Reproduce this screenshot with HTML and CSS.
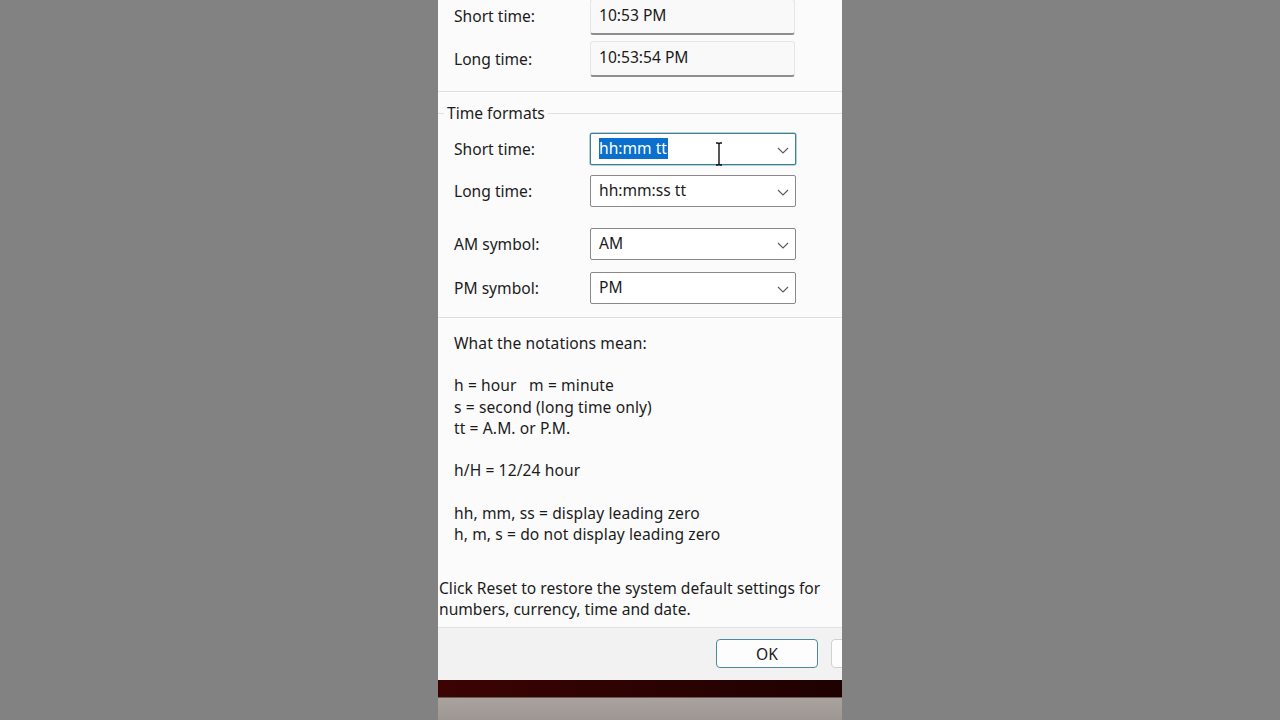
FILE: index.html
```html
<!DOCTYPE html>
<html>
<head>
<meta charset="utf-8">
<link rel="stylesheet" href="styles.css">
</head>
<body>
<div class="panel">
  <div class="top">
    <div class="row r1"><span class="label">Short time:</span><div class="readbox">10:53 PM</div></div>
    <div class="row r2"><span class="label">Long time:</span><div class="readbox">10:53:54 PM</div></div>
  </div>
  <div class="sep"></div>
  <div class="group">
    <div class="legend"><span class="lline short"></span><span class="ltext">Time formats</span><span class="lline"></span></div>
    <div class="row c1"><span class="label">Short time:</span>
      <div class="combo focus"><span class="sel">hh:mm tt</span>
        <svg class="chev" viewBox="0 0 12 7" width="12" height="7"><path d="M1 1 L6 6 L11 1" fill="none" stroke="#5a5a5a" stroke-width="1.1"/></svg>
        <svg class="ibeam" viewBox="0 0 8 24" width="8" height="24"><path d="M1 1 H3 L4 2 L5 1 H7 M4 2 V22 M1 23 H3 L4 22 L5 23 H7" fill="none" stroke="#111" stroke-width="1.4"/></svg>
      </div>
    </div>
    <div class="row c2"><span class="label">Long time:</span>
      <div class="combo"><span>hh:mm:ss tt</span><svg class="chev" viewBox="0 0 12 7" width="12" height="7"><path d="M1 1 L6 6 L11 1" fill="none" stroke="#5a5a5a" stroke-width="1.1"/></svg></div>
    </div>
    <div class="row c3"><span class="label">AM symbol:</span>
      <div class="combo"><span>AM</span><svg class="chev" viewBox="0 0 12 7" width="12" height="7"><path d="M1 1 L6 6 L11 1" fill="none" stroke="#5a5a5a" stroke-width="1.1"/></svg></div>
    </div>
    <div class="row c4"><span class="label">PM symbol:</span>
      <div class="combo"><span>PM</span><svg class="chev" viewBox="0 0 12 7" width="12" height="7"><path d="M1 1 L6 6 L11 1" fill="none" stroke="#5a5a5a" stroke-width="1.1"/></svg></div>
    </div>
  </div>
  <div class="sep sep2"></div>
  <div class="notes">
    <p>What the notations mean:</p>
    <p>&nbsp;</p>
    <p>h = hour&nbsp;&nbsp;&nbsp;m = minute</p>
    <p>s = second (long time only)</p>
    <p>tt = A.M. or P.M.</p>
    <p>&nbsp;</p>
    <p>h/H = 12/24 hour</p>
    <p>&nbsp;</p>
    <p>hh, mm, ss = display leading zero</p>
    <p>h, m, s = do not display leading zero</p>
  </div>
  <div class="reset">
    <p>Click Reset to restore the system default settings for</p>
    <p>numbers, currency, time and date.</p>
  </div>
  <div class="footer">
    <button class="btn ok">OK</button>
    <button class="btn cancel"></button>
  </div>
  <div class="strip"></div>
  <div class="below"></div>
</div>
</body>
</html>
```

FILE: styles.css
```css
html, body {
  margin: 0;
  padding: 0;
  height: 720px;
  overflow: hidden;
}
body {
  background: #828282;
  display: flex;
  justify-content: center;
  font-family: "Noto Sans", "Open Sans", sans-serif;
  font-size: 15.6px;
  color: #1b1b1b;
}
.panel {
  width: 404px;
  height: 720px;
  background: #fbfbfb;
  display: flex;
  flex-direction: column;
  overflow: hidden;
}
.row {
  display: flex;
  align-items: center;
  padding-left: 16px;
}
.label {
  width: 136px;
  flex: none;
}
.top {
  height: 92px;
  margin-top: -1px;
  display: flex;
  flex-direction: column;
  gap: 6px;
}
.readbox {
  width: 205px;
  height: 36px;
  box-sizing: border-box;
  border: 1px solid #e6e6e6;
  border-bottom: 2px solid #8e8e8e;
  border-radius: 3px;
  background: #f9f9f9;
  padding: 4px 0 0 8px;
  line-height: 22px;
}
.r1 .label { margin-top: -2px; }
.sep {
  height: 1px;
  background: #dedede;
  border-bottom: 1px solid #ffffff;
}
.group {
  height: 224px;
  display: flex;
  flex-direction: column;
}
.legend {
  display: flex;
  align-items: center;
  height: 20px;
  margin-top: 10px;
}
.lline {
  flex: 1;
  height: 1px;
  background: #e0e0e0;
}
.lline.short {
  flex: none;
  width: 6px;
}
.ltext {
  padding: 0 3px;
}
.combo {
  position: relative;
  width: 206px;
  height: 32px;
  box-sizing: border-box;
  border: 1px solid #8a8a8a;
  border-radius: 2px;
  background: #ffffff;
  display: flex;
  align-items: center;
  padding-left: 8px;
  padding-bottom: 2px;
}
.combo.focus {
  border-color: #3f8197;
  box-shadow: 0 0 0 0.5px #6fa3b3;
}
.sel {
  background: #0a6fcd;
  color: #ffffff;
  line-height: 21px;
  padding-right: 1px;
}
.chev {
  position: absolute;
  right: 6px;
  top: 13px;
}
.ibeam {
  position: absolute;
  left: 124px;
  top: 8px;
}
.c1 { margin-top: 10px; }
.c2 { margin-top: 10px; }
.c3 { margin-top: 21px; }
.c4 { margin-top: 12px; }
.c1 .label, .c2 .label, .c3 .label, .c4 .label { margin-top: -1px; }
.notes {
  padding: 14px 0 0 16px;
  height: 259px;
  box-sizing: border-box;
}
.notes p, .reset p {
  margin: 0;
  line-height: 21.2px;
  white-space: nowrap;
}
.notes p {
  letter-spacing: 0.1px;
}
.reset {
  padding-left: 1px;
  height: 49px;
  box-sizing: border-box;
}
.footer {
  height: 53px;
  background: #f2f2f2;
  border-top: 1px solid #e2e2e2;
  display: flex;
  align-items: flex-start;
  padding-top: 11px;
  padding-left: 278px;
  gap: 13px;
  box-sizing: border-box;
}
.btn {
  flex: none;
  height: 29px;
  box-sizing: border-box;
  border-radius: 4px;
  background: #fdfdfd;
  font-family: "Noto Sans", "Open Sans", sans-serif;
  font-size: 15.6px;
  color: #1b1b1b;
  padding: 0;
}
.ok {
  width: 102px;
  border: 1.5px solid #4d8b9c;
}
.cancel {
  width: 30px;
  border: 1px solid #d0d0d0;
}
.strip {
  height: 17px;
  background: linear-gradient(90deg, #3c0303 0%, #2a0202 60%, #1e0101 100%);
  border-bottom: 1px solid #6a5a56;
}
.below {
  flex: 1;
  background: linear-gradient(180deg, #aaa29f 0%, #9d9794 100%);
}
```
